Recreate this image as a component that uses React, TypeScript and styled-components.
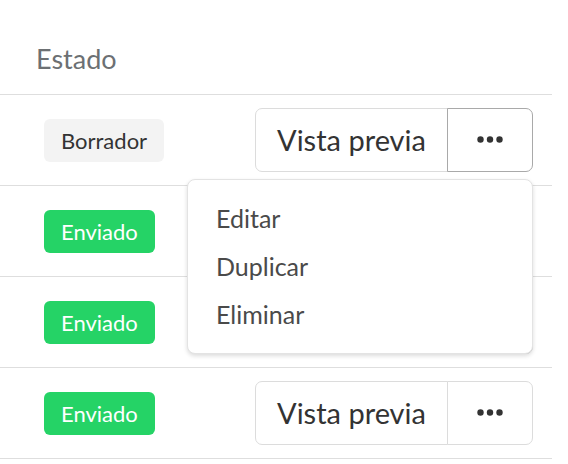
import React from 'react';
import styled, { createGlobalStyle } from 'styled-components';

const GlobalStyle = createGlobalStyle`
  body {
    margin: 0;
    background: #fff;
    font-family: Lato, 'Open Sans', sans-serif;
  }
`;

const Table = styled.div`
  width: 552px;
`;

const HeaderRow = styled.div`
  height: 95px;
  padding: 43px 0 0 36px;
  box-sizing: border-box;
  border-bottom: 1px solid #dedede;
  font-size: 27px;
  line-height: 1.2;
  color: #6c7073;
`;

const Row = styled.div`
  height: 90px;
  display: flex;
  align-items: center;
  justify-content: space-between;
  padding: 0 19px 0 44px;
  border-bottom: 1px solid #dedede;
`;

const Badge = styled.span<{ $sent?: boolean }>`
  display: inline-flex;
  align-items: center;
  height: 43px;
  padding: 0 17px;
  box-sizing: border-box;
  border-radius: 6px;
  font-size: 22px;
  background: ${(p) => (p.$sent ? '#25d366' : '#f3f3f3')};
  color: ${(p) => (p.$sent ? '#fff' : '#333')};
`;

const Group = styled.div`
  position: relative;
  display: flex;
  margin-top: -1px;
`;

const Button = styled.button<{ $active?: boolean; $width: number; $side: 'left' | 'right' }>`
  display: flex;
  align-items: center;
  justify-content: center;
  width: ${(p) => p.$width}px;
  height: 64px;
  box-sizing: border-box;
  padding: 0;
  background: #fff;
  border: 1px solid ${(p) => (p.$active ? '#a9a9a9' : '#dcdcdc')};
  border-radius: ${(p) => (p.$side === 'left' ? '7px 0 0 7px' : '0 7px 7px 0')};
  margin-left: ${(p) => (p.$side === 'right' ? '-1px' : '0')};
  position: relative;
  z-index: ${(p) => (p.$active ? 1 : 0)};
  font-family: inherit;
  font-size: 29px;
  color: #333;
  cursor: pointer;
`;

const Menu = styled.div`
  position: absolute;
  top: 71px;
  right: 0;
  width: 346px;
  z-index: 5;
  box-sizing: border-box;
  padding: 14px 0 15px 28px;
  background: #fff;
  border: 1px solid #e3e3e3;
  border-radius: 8px;
  box-shadow: 0 2px 4px rgba(0, 0, 0, 0.14);
`;

const MenuItem = styled.div`
  font-size: 25px;
  line-height: 48px;
  color: #4a4a4a;
  cursor: pointer;
`;

const Dots = () => (
  <svg width="26" height="7" viewBox="0 0 26 7">
    <circle cx="3.5" cy="3.5" r="3.2" fill="#333" />
    <circle cx="13" cy="3.5" r="3.2" fill="#333" />
    <circle cx="22.5" cy="3.5" r="3.2" fill="#333" />
  </svg>
);

const rows = [
  { status: 'Borrador', sent: false, open: true },
  { status: 'Enviado', sent: true, open: false },
  { status: 'Enviado', sent: true, open: false },
  { status: 'Enviado', sent: true, open: false },
];

const App = () => (
  <>
    <GlobalStyle />
    <Table>
      <HeaderRow>Estado</HeaderRow>
      {rows.map((row, i) => (
        <Row key={i}>
          <Badge $sent={row.sent}>{row.status}</Badge>
          <Group>
            <Button $width={193} $side="left">
              Vista previa
            </Button>
            <Button $width={86} $side="right" $active={row.open}>
              <Dots />
            </Button>
            {row.open && (
              <Menu>
                <MenuItem>Editar</MenuItem>
                <MenuItem>Duplicar</MenuItem>
                <MenuItem>Eliminar</MenuItem>
              </Menu>
            )}
          </Group>
        </Row>
      ))}
    </Table>
  </>
);

export default App;
